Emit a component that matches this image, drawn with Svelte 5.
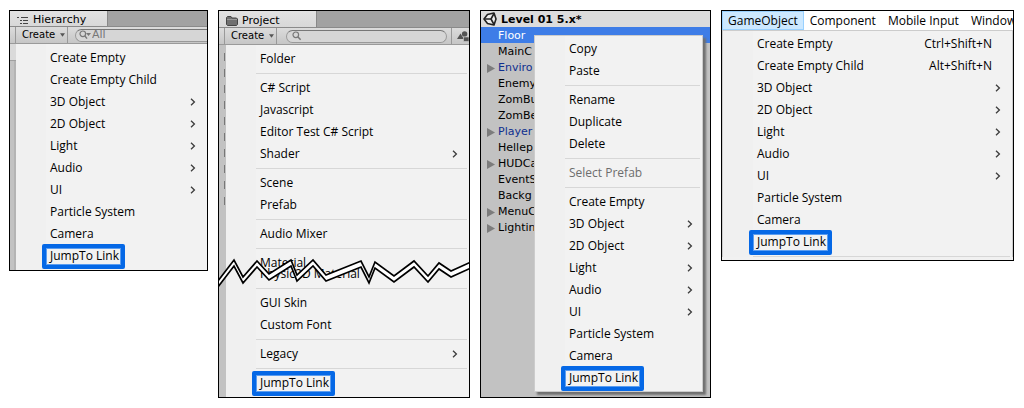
<script>
  const sub = (label) => ({ label, sub: true });
  const item = (label) => ({ label });
  const sep = { sep: true };
  const objects = [sub('3D Object'), sub('2D Object'), sub('Light'), sub('Audio'), sub('UI'), item('Particle System'), item('Camera'), { label: 'JumpTo Link', mark: true }];

  const hierarchyMenu = [item('Create Empty'), item('Create Empty Child'), ...objects];
  const projectMenu = [
    item('Folder'), sep,
    item('C# Script'), item('Javascript'), item('Editor Test C# Script'), sub('Shader'), sep,
    item('Scene'), item('Prefab'), sep,
    item('Audio Mixer'), sep,
    item('Material'), { label: 'Physic2D Material', torn: true }, sep,
    item('GUI Skin'), item('Custom Font'), sep,
    sub('Legacy'), sep,
    { label: 'JumpTo Link', mark: true }
  ];
  const contextMenu = [
    item('Copy'), item('Paste'), sep,
    item('Rename'), item('Duplicate'), item('Delete'), sep,
    { label: 'Select Prefab', off: true }, sep,
    item('Create Empty'), ...objects
  ];
  const gameObjectMenu = [
    { label: 'Create Empty', keys: 'Ctrl+Shift+N' },
    { label: 'Create Empty Child', keys: 'Alt+Shift+N' },
    ...objects, sep
  ];
  const bar = ['GameObject', 'Component', 'Mobile Input', 'Window'];
  const tree = [
    { name: 'Floor', selected: true },
    { name: 'MainC' },
    { name: 'Enviro', fold: true, prefab: true },
    { name: 'Enemy' },
    { name: 'ZomBu' },
    { name: 'ZomBe' },
    { name: 'Player', fold: true, prefab: true },
    { name: 'Hellep' },
    { name: 'HUDCa', fold: true },
    { name: 'EventS' },
    { name: 'Backg' },
    { name: 'MenuC', fold: true },
    { name: 'Lightin', fold: true }
  ];

  // The torn strip: one zigzag edge, repeated a few pixels lower.
  const edge = [[-1, 24], [15, 3], [24, 20], [38, 4], [50, 17], [72, 3], [78, 18], [94, 3], [107, 18], [142, 4], [150, 20], [156, 5], [175, 19], [195, 4], [209, 19], [220, 6], [232, 14], [252, 5]];
  const depth = 6;
  const strip = [...edge, ...edge.map(([x, y]) => [x, y + depth]).reverse()].map((p) => p.join(',')).join(' ');
</script>

{#snippet menu(entries)}
  <ul class="menu">
    {#each entries as e}
      {#if e.sep}
        <li class="sep"></li>
      {:else}
        <li class:torn={e.torn}>
          <button class="item" disabled={e.off}>
            <span class:mark={e.mark}>{e.label}</span>
            {#if e.keys}<span class="keys">{e.keys}</span>{/if}
            {#if e.sub}
              <svg class="chev" width="6" height="8" viewBox="0 0 6 8"><path d="M1 0.8 4.4 4 1 7.2" fill="none" stroke="#3c3c3c" stroke-width="1.3" /></svg>
            {/if}
          </button>
        </li>
      {/if}
    {/each}
  </ul>
{/snippet}

{#snippet create()}
  <button class="create">Create
    <svg width="5" height="4" viewBox="0 0 5 4"><path d="M0 0.3H5L2.5 3.8Z" fill="#555" /></svg>
  </button>
{/snippet}

<main>
  <section class="panel">
    <div class="tabs">
      <button class="tab">
        <svg width="12" height="9" viewBox="0 0 12 9"><path d="M0 1.5H2M4 1.5H11M3 4.5H5M6 4.5H11M3 7.5H5M6 7.5H11" stroke="#444" fill="none" /></svg>
        Hierarchy
      </button>
    </div>
    <div class="tools">
      {@render create()}
      <label class="search open">
        <svg width="13" height="10" viewBox="0 0 13 10"><circle cx="3.8" cy="3.8" r="2.8" fill="none" stroke="#777" stroke-width="1.2" /><path d="M5.8 5.8 8 8.6" stroke="#777" stroke-width="1.4" /><path d="M7 3H12L9.5 6Z" fill="#777" /></svg>
        <input aria-label="Search hierarchy" placeholder="All" />
      </label>
    </div>
    <div class="body">
      <div class="gutter notch"></div>
      {@render menu(hierarchyMenu)}
    </div>
  </section>

  <section class="panel project">
    <div class="tabs">
      <button class="tab">
        <svg width="12" height="10" viewBox="0 0 12 10"><path d="M0.5 8.5V1.5L1.5 0.5H5L6 2H10.5L11.5 3V8.5L10.5 9.5H1.5Z" fill="#707070" stroke="#454545" /><path d="M1 3.5H11" stroke="#999" /></svg>
        Project
      </button>
    </div>
    <div class="tools">
      {@render create()}
      <label class="search">
        <svg width="10" height="10" viewBox="0 0 10 10"><circle cx="3.8" cy="3.8" r="2.8" fill="none" stroke="#777" stroke-width="1.2" /><path d="M5.8 5.8 8.6 8.8" stroke="#777" stroke-width="1.5" /></svg>
        <input aria-label="Search project" />
      </label>
      <button class="filter" aria-label="Filter by type">
        <svg width="12" height="11" viewBox="0 0 12 11"><path d="M0 8 3.5 2.5 7 8Z" fill="#555" /><circle cx="7.6" cy="3" r="2.7" fill="#555" /><path d="M6.5 6H12V10.5H6.5Z" fill="#555" stroke="#ccc" stroke-width="0.6" /></svg>
      </button>
    </div>
    <div class="body">
      <div class="gutter ticks"></div>
      {@render menu(projectMenu)}
      <svg class="tear" viewBox="0 0 250 28" preserveAspectRatio="none">
        <polygon points={strip} fill="#fff" stroke="#000" stroke-width="1.7" />
      </svg>
    </div>
  </section>

  <section class="panel scene">
    <div class="tree">
      <h2>
        <svg width="14" height="14" viewBox="0 0 14 14"><path d="M1 7 4.5 2.5 11 1 13 7 11 13 4.5 11.5Z" fill="#eee" stroke="#222" stroke-width="1.6" stroke-linejoin="round" /><path d="M1.5 7H8M8 7 11 1.5M8 7 11 12.5" stroke="#222" stroke-width="1.6" fill="none" /></svg>
        Level 01 5.x*
      </h2>
      <ul>
        {#each tree as t}
          <li class:selected={t.selected} class:prefab={t.prefab}>
            <span class="fold">{#if t.fold}<svg width="8" height="9" viewBox="0 0 8 9"><path d="M0 0 8 4.5 0 9Z" fill="#7c7c7c" /></svg>{/if}</span>{t.name}
          </li>
        {/each}
      </ul>
    </div>
    <div class="popup">{@render menu(contextMenu)}</div>
  </section>

  <section class="panel">
    <nav>
      {#each bar as b, i}
        <button class:active={i === 0}>{b}</button>
      {/each}
    </nav>
    <div class="drop">{@render menu(gameObjectMenu)}</div>
  </section>
</main>

<style>
  :global(body) { background: #fff; }
  main {
    display: grid;
    grid-template-columns: 199fr 252fr 231fr 293fr;
    gap: 10px;
    align-items: start;
    padding: 10px 10px 10px 9px;
    font: 12px/22px "Open Sans", sans-serif;
    color: #000;
  }
  button, input {
    font: inherit;
    color: inherit;
    background: none;
    border: 0;
    padding: 0;
    margin: 0;
  }
  ul { list-style: none; margin: 0; padding: 0; }
  svg { flex: none; }
  .panel { border: 1px solid #000; background: #f1f1f1; overflow: hidden; min-width: 0; }

  .menu { flex: 1; min-width: 0; padding: 3px 0; background: linear-gradient(90deg, #f0f0f0 30px, #f2f2f2 30px); }
  .item {
    display: flex;
    align-items: center;
    box-sizing: border-box;
    width: 100%;
    height: 22px;
    padding: 0 11px 0 34px;
    white-space: nowrap;
    text-align: left;
  }
  .item:disabled { color: #6d6d6d; }
  .chev { margin-left: auto; }
  .keys { margin-left: auto; padding-right: 9px; }
  .sep { height: 1px; margin: 3px 2px 3px 30px; background: #d7d7d7; }
  .torn { margin-top: -11px; }
  .mark { position: relative; }
  .mark::after {
    content: "";
    position: absolute;
    inset: -1px -6px -2px -8px;
    border: 4px solid #0568e6;
    outline: 1px solid #5b9df0;
    outline-offset: -5px;
    border-radius: 2px;
  }

  .tabs { display: flex; height: 16px; background: #a2a2a2; border-bottom: 1px solid #8a8a8a; box-sizing: border-box; font: 11px/16px "DejaVu Sans", sans-serif; }
  .tab { display: flex; align-items: center; gap: 4px; width: 98px; padding: 3px 0 0 7px; background: linear-gradient(#e2e2e2, #d8d8d8); border-right: 1px solid #888; }
  .tools { display: flex; align-items: center; height: 17px; padding-left: 5px; background: linear-gradient(#dcdcdc, #c6c6c6); border-bottom: 1px solid #9a9a9a; box-sizing: border-box; }
  .project .tabs { height: 17px; }
  .create { display: flex; align-items: center; gap: 5px; align-self: stretch; width: 53px; box-sizing: border-box; padding-left: 6px; border: solid #999; border-width: 0 1px; font: 10px/16px "DejaVu Sans", sans-serif; }
  .search { display: flex; align-items: center; flex: 1; min-width: 0; height: 13px; box-sizing: border-box; margin: 0 4px 0 9px; padding-left: 5px; border: 1px solid #999; border-top: 1px solid #777; border-radius: 7px; background: #d6d6d6; color: #777; }
  .search.open { margin: 0 0 0 7px; padding-left: 3px; border-right: 0; border-radius: 7px 0 0 7px; }
  .search input { flex: 1; min-width: 0; height: 12px; outline: 0; font: 11px/12px "DejaVu Sans", sans-serif; }
  .search input::placeholder { color: #777; opacity: 1; }
  .filter { display: flex; align-items: center; align-self: stretch; width: 18px; padding-left: 5px; box-sizing: border-box; border-left: 1px solid #999; overflow: hidden; }

  .body { display: flex; position: relative; }
  .gutter { width: 6px; background: linear-gradient(90deg, #c2c2c2 4px, #b4b4b4 4px); }
  .project .gutter { width: 7px; }
  .notch { background: linear-gradient(#dadada 16px, #a0a0a0 16px, #a0a0a0 17px, transparent 17px), linear-gradient(90deg, #c2c2c2 4px, #b4b4b4 4px); }
  .project .ticks { background: repeating-linear-gradient(transparent 0 8px, #777 8px 16px) 5px 0 / 1px 164px no-repeat, #c2c2c2; }
  .tear { position: absolute; left: 0; top: 212px; width: 100%; height: 28px; overflow: visible; }

  .scene { display: grid; background: #c2c2c2; }
  .tree, .popup { grid-area: 1 / 1; min-width: 0; }
  .tree { font: 11px/16px "DejaVu Sans", sans-serif; }
  h2 { display: flex; align-items: center; gap: 4px; margin: 0; padding: 2px 0 0 2px; font: bold 11px/14px "DejaVu Sans", sans-serif; background: #dcdcdc; }
  h2 svg { margin-top: -2px; }
  .tree li { display: flex; align-items: center; box-sizing: border-box; height: 16px; padding-top: 2px; white-space: nowrap; }
  .fold { display: flex; width: 11px; padding-left: 6px; }
  .selected { background: #3e7de7; color: #fff; }
  .prefab { color: #0f2f8f; }
  .popup { margin: 24px 7px 5px 53px; border: 1px solid #ccc; background: #f1f1f1; box-shadow: 3px 3px 2px #707070; z-index: 1; }
  .popup .menu { padding: 2px 0; }
  .popup .item { padding-right: 9px; }

  nav { display: flex; height: 19px; background: #fff; line-height: 18px; overflow: hidden; }
  nav button { flex: none; padding: 0 5px; border: 1px solid transparent; white-space: nowrap; }
  nav .active { background: #cce8ff; border-color: #99d1ff; }
  .drop { border: 1px solid #ccc; border-bottom: 0; }
  .drop .menu { padding: 2px 0 0; }
</style>
